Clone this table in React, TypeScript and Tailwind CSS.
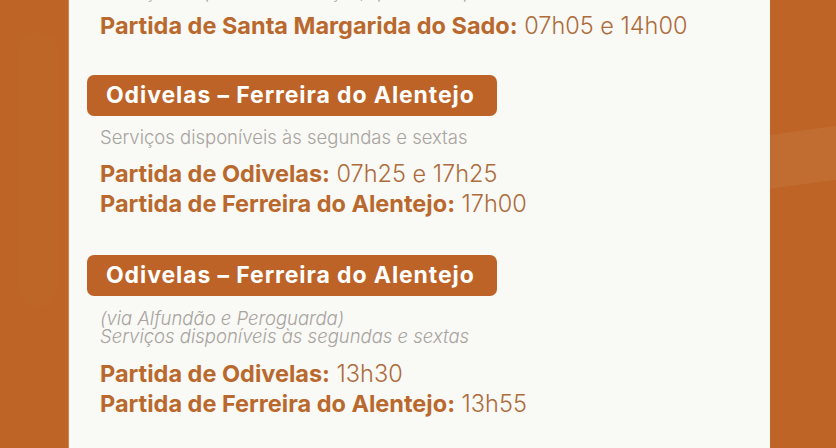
import React from 'react';

type Route = {
  title: string;
  notes: { text: string; italic?: boolean }[];
  departures: { label: string; times: string }[];
};

const routes: Route[] = [
  {
    title: 'Odivelas – Ferreira do Alentejo',
    notes: [{ text: 'Serviços disponíveis às segundas e sextas' }],
    departures: [
      { label: 'Partida de Odivelas:', times: '07h25 e 17h25' },
      { label: 'Partida de Ferreira do Alentejo:', times: '17h00' },
    ],
  },
  {
    title: 'Odivelas – Ferreira do Alentejo',
    notes: [
      { text: '(via Alfundão e Peroguarda)', italic: true },
      { text: 'Serviços disponíveis às segundas e sextas', italic: true },
    ],
    departures: [
      { label: 'Partida de Odivelas:', times: '13h30' },
      { label: 'Partida de Ferreira do Alentejo:', times: '13h55' },
    ],
  },
];

const Departure: React.FC<{ label: string; times: string }> = ({ label, times }) => (
  <p className="text-[23.5px] leading-[30px] text-[#b9692e] whitespace-nowrap">
    <span className="font-bold">{label}</span>{' '}
    <span className="font-light text-[#ad6c3c]">{times}</span>
  </p>
);

const RouteBlock: React.FC<{ route: Route; first?: boolean }> = ({ route, first }) => {
  const multi = route.notes.length > 1;
  return (
    <div className={first ? 'mt-[34px]' : 'mt-[36px]'}>
      <div className="flex h-[41px] w-[410px] items-center rounded-[7px] bg-[#bd6328] pl-[19px] text-[23px] font-bold tracking-[0.9px] text-white whitespace-nowrap">
        {route.title}
      </div>
      <div className={multi ? 'mt-[13px] pl-[13px]' : 'mt-[10px] pl-[13px]'}>
        {route.notes.map((n, i) => (
          <p
            key={i}
            className={`text-[18.5px] font-light text-[#a8a49f] whitespace-nowrap ${
              multi ? 'leading-[18px]' : 'leading-[22px]'
            } ${n.italic ? 'italic' : ''}`}
          >
            {n.text}
          </p>
        ))}
      </div>
      <div className={multi ? 'mt-[14px] pl-[13px]' : 'mt-[11px] pl-[13px]'}>
        {route.departures.map((d, i) => (
          <Departure key={i} label={d.label} times={d.times} />
        ))}
      </div>
    </div>
  );
};

export default function App() {
  return (
    <div
      className="relative h-[448px] w-[836px] overflow-hidden bg-[#bd6426]"
      style={{ fontFamily: 'Inter, "Noto Sans", sans-serif' }}
    >
      {/* soft background shapes */}
      <div className="absolute left-[18px] top-[32px] h-[275px] w-[40px] rounded-[20px] bg-[#c06a2c] opacity-40" />
      <div className="absolute left-[760px] top-[130px] h-[54px] w-[90px] -skew-y-[8deg] bg-[#c26e33] opacity-80" />

      <div className="relative ml-[68px] flex h-full w-[702px] flex-col items-start border-l border-[#c98a58] bg-[#f9f9f5] pl-[18px]">
        <p className="-mt-[20px] h-[22px] pl-[13px] text-[18.5px] font-light leading-[22px] text-[#a8a49f] whitespace-nowrap">
          Serviços disponíveis às terças, quartas e quintas-feiras
        </p>
        <div className="mt-[9px] pl-[13px]">
          <Departure label="Partida de Santa Margarida do Sado:" times="07h05 e 14h00" />
        </div>
        {routes.map((r, i) => (
          <RouteBlock key={i} route={r} first={i === 0} />
        ))}
      </div>
    </div>
  );
}
